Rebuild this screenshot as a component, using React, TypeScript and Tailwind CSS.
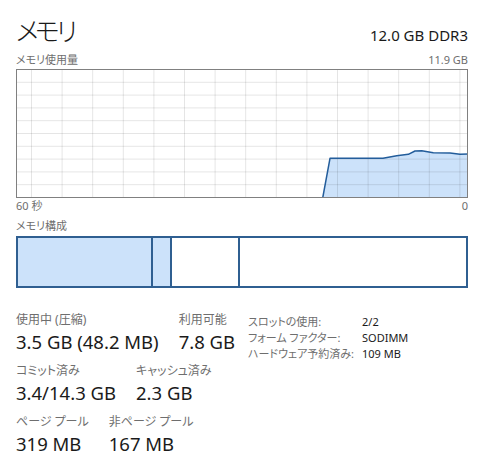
import React from 'react';

const font = "font-['Noto_Sans','Noto_Sans_CJK_JP',sans-serif] [font-feature-settings:'palt']";

// points of the usage line, in graph coordinates (452 x 129)
const usage: [number, number][] = [
  [306.7, 129],
  [314, 89.3],
  [367, 89.3],
  [380.7, 86.7],
  [392.3, 85.3],
  [399, 82],
  [405.7, 81.7],
  [417.3, 83.7],
  [434, 84],
  [444, 85.3],
  [452, 85],
];

const UsageGraph: React.FC = () => {
  const W = 452;
  const H = 129;
  const cols = Array.from({ length: 15 }, (_, i) => 15.5 + i * 30.6);
  const rows = Array.from({ length: 9 }, (_, i) => 0.5 + (i + 1) * 12.8);
  const line = usage.map(([x, y]) => `${x},${y}`).join(' ');
  const area = `M${usage[0][0]},${H} L${line} L${W},${H} Z`;

  return (
    <svg width={W} height={H} viewBox={`0 0 ${W} ${H}`} className="block">
      <rect x={0} y={0} width={W} height={H} fill="#ffffff" />
      <path d={area} fill="#cce2fa" />
      {cols.map((x) => (
        <line key={`c${x}`} x1={x} y1={0} x2={x} y2={H} stroke="#000" strokeOpacity={0.1} strokeWidth={1} />
      ))}
      {rows.map((y) => (
        <line key={`r${y}`} x1={0} y1={y} x2={W} y2={y} stroke="#000" strokeOpacity={0.1} strokeWidth={1} />
      ))}
      <polyline points={line} fill="none" stroke="#235d9b" strokeWidth={1.5} strokeLinejoin="round" />
      <rect x={0.5} y={0.5} width={W - 1} height={H - 1} fill="none" stroke="#808080" strokeWidth={1} />
    </svg>
  );
};

const Stat: React.FC<{ label: string; value: string }> = ({ label, value }) => (
  <div className="flex flex-col">
    <div className="text-[12px] leading-[16px] text-[#6e6e6e]">{label}</div>
    <div className="mt-[2px] text-[18.5px] leading-[24px] text-[#1a1a1a] whitespace-nowrap">{value}</div>
  </div>
);

const App: React.FC = () => {
  return (
    <div className={`w-[492px] h-[475px] bg-white pl-4 pr-6 pt-[12px] ${font}`}>
      {/* Header */}
      <div className="flex items-baseline justify-between h-[38px]">
        <div className="text-[26px] font-light leading-[38px] tracking-[-0.14em] text-[#1a1a1a]">メモリ</div>
        <div className="text-[15px] leading-[38px] text-[#1a1a1a]">12.0 GB DDR3</div>
      </div>

      {/* Usage graph */}
      <div className="flex items-end justify-between h-[19px] text-[11px] leading-[18px] text-[#6e6e6e]">
        <span>メモリ使用量</span>
        <span>11.9 GB</span>
      </div>
      <UsageGraph />
      <div className="flex justify-between h-[16px] text-[11px] leading-[16px] text-[#6e6e6e]">
        <span>60 秒</span>
        <span>0</span>
      </div>

      {/* Composition */}
      <div className="h-[22px] pt-[3px] text-[11px] leading-[18px] text-[#6e6e6e]">メモリ構成</div>
      <div className="flex h-[52px] border-2 border-[#2f5f91]">
        <div className="w-[133px] bg-[#cce2fa]" />
        <div className="w-[19px] bg-[#cce2fa] border-l-2 border-[#2f5f91]" />
        <div className="w-[68px] bg-white border-l-2 border-[#2f5f91]" />
        <div className="flex-1 bg-white border-l-2 border-[#2f5f91]" />
      </div>

      {/* Stats */}
      <div className="flex mt-[24px]">
        <div className="flex flex-col gap-[9px] w-[232px]">
          <div className="flex gap-5">
            <Stat label="使用中 (圧縮)" value="3.5 GB (48.2 MB)" />
            <Stat label="利用可能" value="7.8 GB" />
          </div>
          <div className="flex gap-5">
            <Stat label="コミット済み" value="3.4/14.3 GB" />
            <Stat label="キャッシュ済み" value="2.3 GB" />
          </div>
          <div className="flex gap-5">
            <Stat label="ページ プール" value="319 MB" />
            <Stat label="非ページ プール" value="167 MB" />
          </div>
        </div>
        <div className="mt-[2px] grid grid-cols-[114px_auto] text-[11px] leading-[16px] h-fit">
          <span className="text-[#6e6e6e]">スロットの使用:</span>
          <span className="text-[#1a1a1a]">2/2</span>
          <span className="text-[#6e6e6e]">フォーム ファクター:</span>
          <span className="text-[#1a1a1a]">SODIMM</span>
          <span className="text-[#6e6e6e]">ハードウェア予約済み:</span>
          <span className="text-[#1a1a1a]">109 MB</span>
        </div>
      </div>
    </div>
  );
};

export default App;
